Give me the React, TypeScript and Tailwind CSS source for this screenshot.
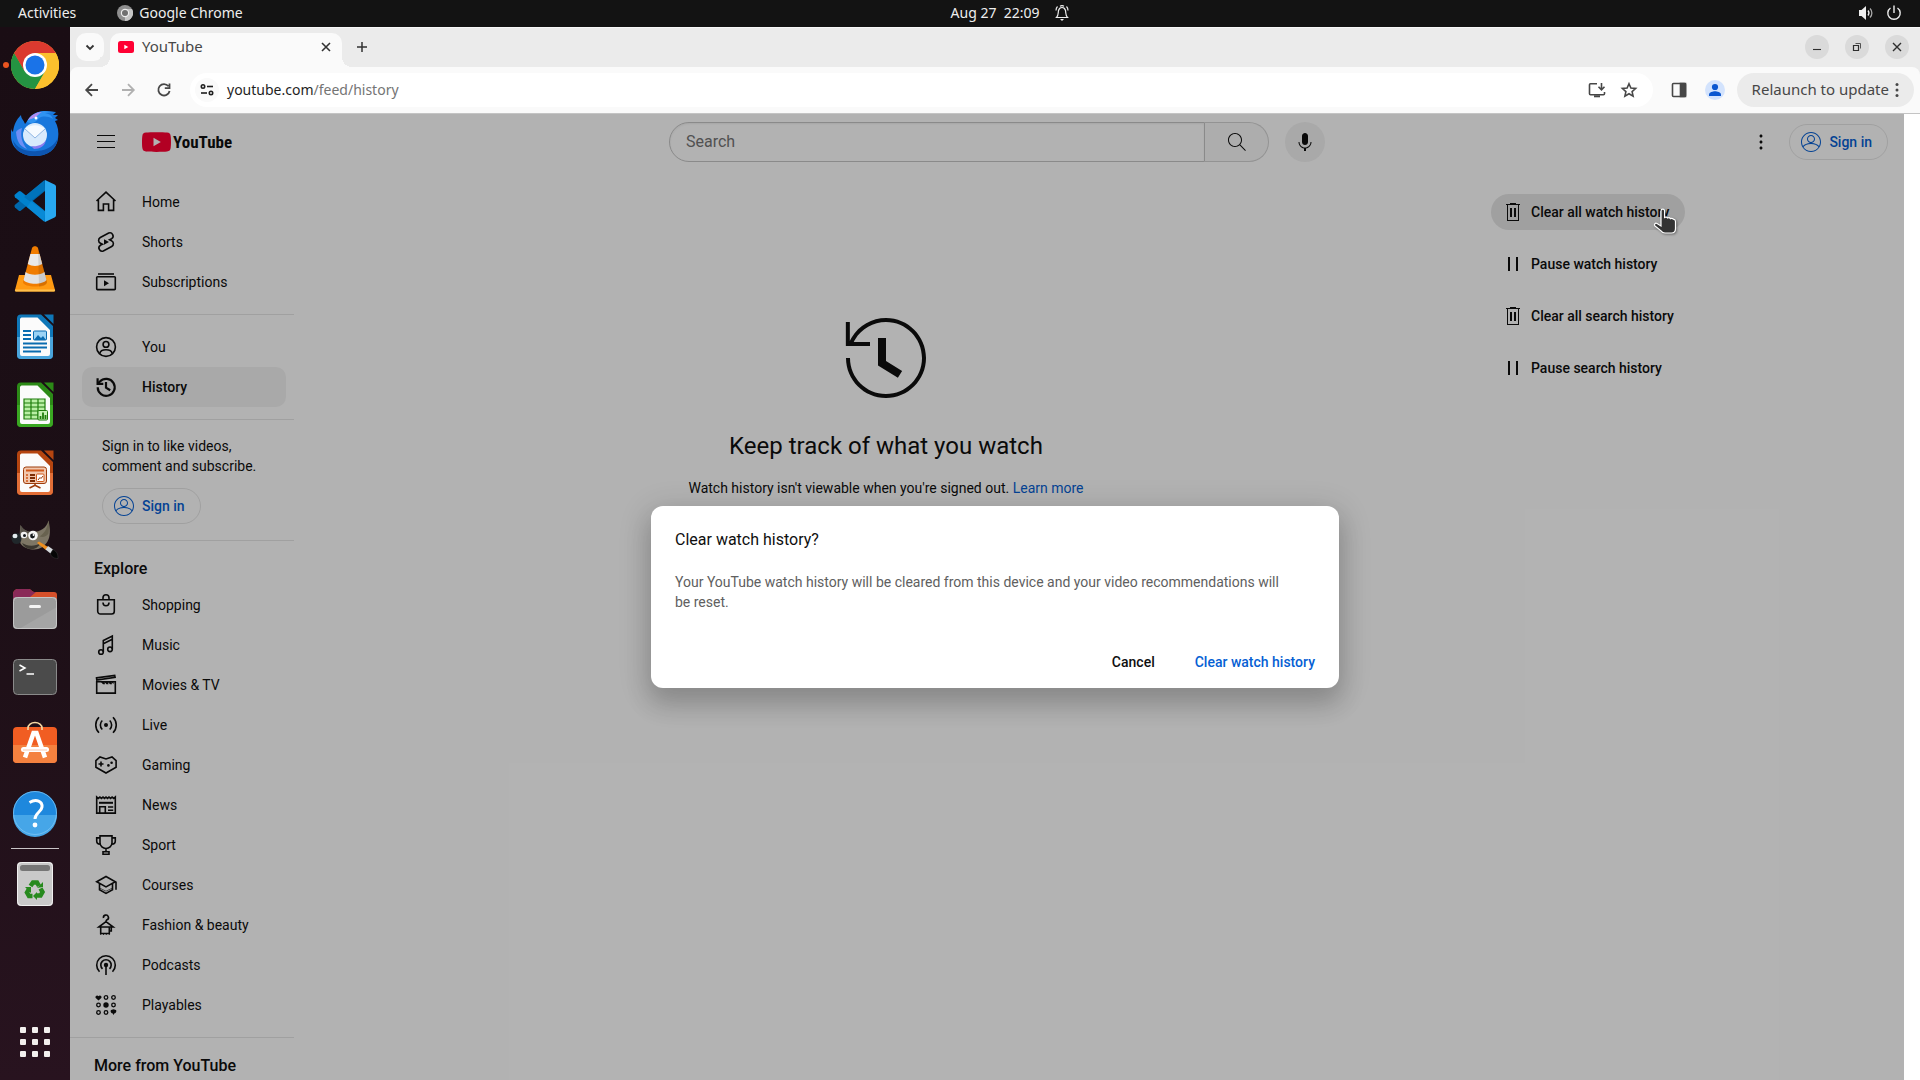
import React from "react";

type IconProps = { children: React.ReactNode; className?: string; box?: string };

/* Filled 24px glyph */
function Glyph({ children, className = "size-6", box = "0 0 24 24" }: IconProps) {
  return (
    <svg viewBox={box} className={`${className} shrink-0`} fill="currentColor" aria-hidden="true">
      {children}
    </svg>
  );
}

/* Outlined 24px glyph */
function Line({ children, className = "size-6", box = "0 0 24 24" }: IconProps) {
  return (
    <svg
      viewBox={box}
      className={`${className} shrink-0`}
      fill="none"
      stroke="currentColor"
      strokeWidth="1.6"
      aria-hidden="true"
    >
      {children}
    </svg>
  );
}

const DockArt = ({ children }: { children: React.ReactNode }) => (
  <svg viewBox="0 0 48 48" className="size-12" aria-hidden="true">
    {children}
  </svg>
);

/* ---------- Dock ---------- */

function OfficeDoc({ dark, light, children }: { dark: string; light: string; children: React.ReactNode }) {
  return (
    <DockArt>
      <path d="M10 1.5h20L42 13v29a4 4 0 0 1-4 4H10a4 4 0 0 1-4-4V5.500a4 4 0 0 1 4-4z" fill={dark} />
      <path d="M6 24h36v18a4 4 0 0 1-4 4H10a4 4 0 0 1-4-4z" fill={light} />
      <path d="M10.500 4.500h16L39 17v24a2 2 0 0 1-2 2H11a2 2 0 0 1-2-2V6.500a2 2 0 0 1 1.500-2z" fill="#fbfbfb" />
      <path d="M33 1.500h9.500v9.500z" fill={dark} />
      {children}
    </DockArt>
  );
}

const dockApps: { name: string; active?: boolean; art: React.ReactNode }[] = [
  {
    name: "Google Chrome",
    active: true,
    art: (
      <DockArt>
        <circle cx="24" cy="24" r="24" fill="#fbc02d" />
        <path d="M3.200 12A24 24 0 0 1 44.800 12H24L13.600 30z" fill="#db3a2f" />
        <path d="M3.200 12A24 24 0 0 0 24 48l10.400-18H24L13.600 30z" fill="#249442" />
        <path d="M24 12h20.800A24 24 0 0 1 24 48l10.400-18z" fill="#fbc02d" />
        <path d="M3.200 12 13.600 30 20 20 24 12z" fill="#db3a2f" />
        <circle cx="24" cy="24" r="12" fill="#fff" />
        <circle cx="24" cy="24" r="9.500" fill="#1a73e8" />
      </DockArt>
    ),
  },
  {
    name: "Thunderbird",
    art: (
      <DockArt>
        <path d="M0 19c0 2 1 3 2 4 1-7 3-12 8-17 0 4 3 5 4 9l3-4C20 5 27 2 35 2l10 1-3 3h5l-3 3 3 2-3 1c3 5 4 11 3 18-2 11-11 17-23 17C10 47 0 39 0 27z" fill="#1877dc" />
        <path d="M2 31c4 9 14 12 24 11 12-1 19-7 21-14-1 12-10 19-23 19S3 41 2 31z" fill="#0d55b0" />
        <path d="M16 13c2-6 9-10 17-11l10 1-9 1c5 1 7 3 8 6-5-3-10-3-14-1-3 5-8 6-12 4z" fill="#2f93f2" />
        <path d="M17 11c3-5 8-8 14-8-4 2-4 4-8 6-2 1-4 1-6 2z" fill="#b08cf0" />
        <circle cx="25" cy="9" r="1.500" fill="#fff" />
        <path d="M5 23c1 9 3 14 11 17-5-6-7-13-5-21-3 1-5 2-6 4z" fill="#6e8ff5" />
        <circle cx="24" cy="26" r="12" fill="#d8eafc" />
        <path d="M14 20c6-5 14-5 20 0L24 29z" fill="#f5faff" />
        <path d="m14 20 10 9 10-9" fill="none" stroke="#8fb6e3" strokeWidth="1" />
        <path d="M20 37c6 1 12-1 15-6-1 6-6 9-12 9z" fill="#8c7df0" />
      </DockArt>
    ),
  },
  {
    name: "Visual Studio Code",
    art: (
      <DockArt>
        <path d="M34 3v11L10 33.500a2 2 0 0 1-2.500 0L4 30.500a2 2 0 0 1 0-2.700z" fill="#0067ab" />
        <path d="M34 45V34L10 14.500a2 2 0 0 0-2.500 0L4 17.500a2 2 0 0 0 0 2.700z" fill="#0082ce" />
        <path d="M34 3v42l9.500-4.500a2.500 2.500 0 0 0 1.500-2V9.500a2.500 2.500 0 0 0-1.500-2z" fill="#28a8f0" />
        <path d="M33 3.500 13 20l6 4.500L34 13z" fill="#0073ba" />
        <path d="M33 44.500 16 30l4-5.500L34 35z" fill="#098ad6" />
      </DockArt>
    ),
  },
  {
    name: "VLC media player",
    art: (
      <DockArt>
        <path d="M8 30h32l4 15a1 1 0 0 1-1 1.500H5A1 1 0 0 1 4 45z" fill="#ff9a12" />
        <path d="M4 44.500h40v1.200a1 1 0 0 1-1 .800H5a1 1 0 0 1-1-.800z" fill="#ffc04c" />
        <path d="m21 3-9 34c0 6 24 6 24 0L27 3c-1-2.500-5-2.500-6 0z" fill="#f07c00" />
        <path d="M19.400 9h9.200l2.600 10c-4 2.500-10.400 2.500-14.400 0z" fill="#e9e9e9" />
        <path d="m14.600 27-2 8c4 5 18.800 5 22.800 0l-2-8c-4 3.500-14.800 3.500-18.800 0z" fill="#e2e2e2" />
        <path d="M27 3l9 34c0 3-4 4.500-8 4.800z" fill="#000" opacity=".1" />
      </DockArt>
    ),
  },
  {
    name: "LibreOffice Writer",
    art: (
      <OfficeDoc dark="#0f77b8" light="#4aa5dc">
        <path d="M12 18h8M12 22h8M12 26h8M12 30.500h24M12 34.500h24M12 38.500h18" stroke="#0a6cb0" strokeWidth="2" />
        <rect x="22.500" y="18" width="13" height="9" rx="1" fill="#9bd3f5" stroke="#0a6cb0" />
        <path d="m23 27 4-5 3 3 2-2 3 4z" fill="#0a6cb0" />
      </OfficeDoc>
    ),
  },
  {
    name: "LibreOffice Calc",
    art: (
      <OfficeDoc dark="#2c8a17" light="#3aa822">
        <path d="M13 18h21v20H13z" fill="#b9efa4" />
        <path d="M13 18h21v20H13zM20 18v20M27 18v20M13 22h21M13 26h21M13 30h21M13 34h21" fill="none" stroke="#1f7d0c" strokeWidth="1.200" />
        <rect x="27" y="29.500" width="9.500" height="9.500" rx="1" fill="#c7f3b5" stroke="#1f7d0c" />
        <path d="M29.500 38v-3M32 38v-6.500M34.500 38v-4" stroke="#1f7d0c" strokeWidth="1.800" />
      </OfficeDoc>
    ),
  },
  {
    name: "LibreOffice Impress",
    art: (
      <OfficeDoc dark="#b54510" light="#e26e37">
        <rect x="12.500" y="18" width="23" height="16.500" rx="2.500" fill="#f1c7ad" stroke="#9c3c0b" />
        <path d="M15 21.500h18" stroke="#d0581a" strokeWidth="2" />
        <path d="M15 26h2M15 29h2M15 32h2" stroke="#d0581a" strokeWidth="1.600" />
        <path d="M19 26h5M19 29h5M19 32h5" stroke="#7c2d06" strokeWidth="1.800" />
        <rect x="25.500" y="25" width="7.500" height="7.500" rx="1" fill="#fff" stroke="#d0581a" />
        <path d="m27 31 2-2.500 1 1 2-2.500" fill="none" stroke="#9c3c0b" />
        <path d="M24 34.500v2M18.500 39l5-2.500h1l5 2.500" fill="none" stroke="#9c3c0b" strokeWidth="1.600" />
      </OfficeDoc>
    ),
  },
  {
    name: "GIMP",
    art: (
      <DockArt>
        <path d="M9.500 8c2 4 6 7 12 7 8 0 14-4 16-11.500 2 9 2 16-1 21-3 5-8 8-13 8-6 0-11-2-14-6-1-6-1-12 0-18.500z" fill="#7d7665" />
        <path d="M9.500 8c2 4 6 7 12 7-6 1-9 2-12.500 5z" fill="#57524a" />
        <path d="M37.500 3.500c-1 7-3 12-9 16 4 1 7 0 9-3 .6-4 .6-8 0-13z" fill="#68624f" />
        <path d="M11 26c5 3 12 4 19 0-3 5-7 6.500-10 6-4 0-7-2-9-6z" fill="#3b372f" />
        <ellipse cx="5.500" cy="21.500" rx="5" ry="5.500" fill="#20272b" />
        <ellipse cx="4" cy="19" rx="2.500" ry="2.200" fill="#e4eaee" />
        <circle cx="13" cy="18" r="3.300" fill="#f2f2f2" />
        <circle cx="13.500" cy="18.500" r="1.500" fill="#15191c" />
        <circle cx="22" cy="18.500" r="4.800" fill="#f6f6f6" />
        <circle cx="21.500" cy="19" r="2.400" fill="#15191c" />
        <circle cx="22.500" cy="18" r=".9" fill="#fff" />
        <path d="m26 26 2-1.500 9 5.500-2 3z" fill="#ee8f1f" />
        <path d="m34.500 32.500 2.500-3.500 5 3.500-2.500 4z" fill="#d5d9dc" />
        <path d="m39.500 36.500 2.500-4c4 2 5 4.500 5 9-3 0-7-1-7.500-5z" fill="#060606" stroke="#3a3a3a" strokeWidth=".5" />
      </DockArt>
    ),
  },
  {
    name: "Files",
    art: (
      <DockArt>
        <path d="M2 9a5 5 0 0 1 5-5h11c2 0 3 3 5 3h20a3 3 0 0 1 3 3v10H2z" fill="#d6502a" />
        <path d="M2 9a5 5 0 0 1 5-5h11c2 0 3 3 5 3h2L12 18H2z" fill="#8a2a58" />
        <rect x="2" y="12" width="44" height="32" rx="4" fill="#a5a5a5" />
        <path d="M2 16a4 4 0 0 1 4-4h36a4 4 0 0 1 4 4v6L8 44H6a4 4 0 0 1-4-4z" fill="#979797" opacity=".7" />
        <rect x="2.500" y="12.500" width="43" height="31" rx="4" fill="none" stroke="#cfcfcf" strokeWidth=".8" />
        <rect x="18" y="20" width="12" height="3" rx="1.500" fill="#f4f4f4" />
      </DockArt>
    ),
  },
  {
    name: "Terminal",
    art: (
      <DockArt>
        <rect x="2.500" y="6.500" width="43" height="35" rx="4" fill="#4b4b4b" stroke="#8a8a8a" />
        <path d="m8.500 12 5.500 3-5.500 3M15.500 21H23" fill="none" stroke="#fff" strokeWidth="1.500" />
      </DockArt>
    ),
  },
  {
    name: "Ubuntu Software",
    art: (
      <DockArt>
        <path d="M2 10a4 4 0 0 1 4-4h36a4 4 0 0 1 4 4v28a4 4 0 0 1-4 4H6a4 4 0 0 1-4-4z" fill="#f15d22" />
        <path d="M2 24h44v14a4 4 0 0 1-4 4H6a4 4 0 0 1-4-4z" fill="#f4813f" />
        <path d="M17 9V7a7 5.500 0 0 1 14 0v2" fill="none" stroke="#f7d9a4" strokeWidth="1.600" />
        <path d="M14 36.500 22.500 12h3L34 36.500" fill="none" stroke="#fff" strokeWidth="4.500" />
        <rect x="10" y="26" width="28" height="5" rx="2.500" fill="#fff" />
        <path d="M12 29h24" stroke="#f6b99b" strokeWidth=".8" />
      </DockArt>
    ),
  },
  {
    name: "Help",
    art: (
      <DockArt>
        <circle cx="24" cy="24" r="22" fill="#1e88dd" />
        <path d="M2 26h44a22 22 0 0 1-44 0z" fill="#46a6e8" />
        <circle cx="24" cy="24" r="21.500" fill="none" stroke="#7cc4f2" strokeWidth=".8" />
        <path d="M18.500 13.500c7-4 13-1 12.500 4.500-.5 5-7 6-7 12" fill="none" stroke="#fff" strokeWidth="3" />
        <circle cx="24" cy="36" r="2.400" fill="#fff" />
      </DockArt>
    ),
  },
];

function Dock() {
  return (
    <nav aria-label="Dock" className="flex w-[70px] shrink-0 flex-col items-center bg-linear-to-b from-[#1a0d14] via-[#1c0f16] to-[#28131f] pt-1">
      {dockApps.map((app) => (
        <button key={app.name} aria-label={app.name} className="relative flex h-[68px] w-full shrink-0 items-center justify-center">
          {app.active && <span className="absolute left-[3px] size-1.5 rounded-full bg-[#e95420]" />}
          {app.art}
        </button>
      ))}
      <div className="mt-px h-px w-12 shrink-0 bg-[#c9c5c7]" />
      <button aria-label="Trash" className="mt-px flex h-[68px] w-full shrink-0 items-center justify-center">
        <DockArt>
          <rect x="6" y="2" width="36" height="44" rx="4" fill="#c9c9c9" />
          <rect x="6.500" y="2.500" width="35" height="43" rx="4" fill="none" stroke="#f0f0f0" />
          <rect x="9" y="5" width="30" height="6" rx="2.500" fill="#767676" />
          <g fill="none" stroke="#278a1e" strokeWidth="4.500">
            <path d="m19.500 26 2.500-3.500h4l2 3.500" />
            <path d="m29.500 28.500 2 3.500-2 3.500h-4.500" />
            <path d="M21.500 36h-3.500l-2-3.500 2-3.500" />
          </g>
          <path d="m26 28 6-1V22zM26 32v8l-4-4zM14 27h6v6z" fill="#278a1e" />
        </DockArt>
      </button>
      <button aria-label="Show Applications" className="mt-auto mb-1 flex h-[68px] w-full shrink-0 items-center justify-center">
        <span className="grid grid-cols-3 gap-1.5">
          {Array.from({ length: 9 }, (_, i) => (
            <span key={i} className="size-1.5 rounded-[1px] bg-[#f2f0ee]" />
          ))}
        </span>
      </button>
    </nav>
  );
}

/* ---------- System bar ---------- */

function SystemBar() {
  return (
    <header className="grid h-[27px] shrink-0 grid-cols-[1fr_auto_1fr] items-center bg-[#131313] pb-0.5 font-['Noto_Sans',sans-serif] text-[14px] leading-5 text-[#eeeeee]">
      <div className="flex items-center pl-[18px]">
        <button>Activities</button>
        <button className="ml-[41px] flex items-center gap-1.5">
          <svg viewBox="0 0 16 16" className="size-4" aria-hidden="true">
            <circle cx="8" cy="8" r="8" fill="#8f8f8f" />
            <path d="M8 16a8 8 0 0 0 7-12H8z" fill="#c6c6c6" />
            <circle cx="8" cy="8" r="4.200" fill="#eee" />
            <circle cx="8" cy="8" r="3" fill="#707070" />
          </svg>
          Google Chrome
        </button>
      </div>
      <button className="flex items-center gap-4 pl-25">
        <span className="whitespace-pre">Aug 27  22:09</span>
        <svg viewBox="0 0 14 16" className="h-4 w-3.5" fill="none" stroke="#eee" strokeWidth="1.200" aria-hidden="true">
          <path d="M1.500 12.500c2-1.500 1.500-4 2-7C4 3.500 5.500 2.500 7 2.500s3 1 3.500 3c.5 3 0 5.500 2 7zM2.500 1.500C1.500 2.500 1 4 1 5.500M11.500 1.500c1 1 1.500 2.500 1.500 4" />
          <path d="M5 14h4l-2 2z" fill="#eee" stroke="none" />
          <path d="M5 1.200c1-.6 3-.6 4 0" />
        </svg>
      </button>
      <button aria-label="System menu" className="flex items-center gap-3 justify-self-end pr-[18px]">
        <svg viewBox="0 0 16 16" className="size-4" fill="none" stroke="#eee" strokeWidth="1.300" aria-hidden="true">
          <path d="M1 5h2.500L8 1v14l-4.500-4H1z" fill="#eee" stroke="none" />
          <path d="M10 5.500c1.200 1.500 1.200 3.500 0 5" />
          <path d="M12 3.500c2.500 2.500 2.500 6.500 0 9" stroke="#aaa" />
        </svg>
        <svg viewBox="0 0 16 16" className="size-4" fill="none" stroke="#eee" strokeWidth="1.400" aria-hidden="true">
          <path d="M4.500 3a6.200 6.200 0 1 0 7 0M8 .5V8" />
        </svg>
      </button>
    </header>
  );
}

/* ---------- Browser chrome ---------- */

const roundButton = "flex size-6 items-center justify-center rounded-full bg-[#dadada]";

function TabStrip() {
  return (
    <div className="flex h-10 items-end justify-between border-t border-[#f7f7f7] bg-[#ebebeb]">
      <div className="flex h-[34px] items-start">
        <button aria-label="Search tabs" className="ml-1.5 flex size-7 items-center justify-center rounded-[10px] bg-[#fafafa] text-[#333]">
          <Line className="size-4" box="0 0 16 16">
            <path d="m4.500 6.500 3.500 3.500 3.500-3.500" strokeWidth="1.800" />
          </Line>
        </button>
        <div className="relative ml-1.5 flex h-[34px] w-58 rounded-t-[10px] bg-[#fafafa] pr-2 pl-2">
          <span className="absolute bottom-0 -left-2.5 size-2.5 bg-radial-[circle_at_0_0] from-[#ebebeb] from-[10px] to-[#fafafa] to-[10px]" />
          <span className="absolute -right-2.5 bottom-0 size-2.5 bg-radial-[circle_at_100%_0] from-[#ebebeb] from-[10px] to-[#fafafa] to-[10px]" />
          <button className="flex h-7 flex-1 items-center gap-2 text-left text-[15px] text-[#474747]">
            <svg viewBox="0 0 16 12" className="h-3 w-4" aria-hidden="true">
              <rect width="16" height="12" rx="2.500" fill="#ff0033" />
              <path d="M6.300 3.700v4.600l4-2.300z" fill="#fff" />
            </svg>
            <span className="pb-0.5">YouTube</span>
          </button>
          <button aria-label="Close tab" className="flex h-7 w-4 items-center justify-center text-[#333]">
            <Line className="size-4" box="0 0 16 16">
              <path d="m4 4 8 8M12 4l-8 8" strokeWidth="1.600" />
            </Line>
          </button>
        </div>
        <button aria-label="New tab" className="ml-1.5 flex size-7 items-center justify-center text-[#333]">
          <Line className="size-4" box="0 0 16 16">
            <path d="M8 3v10M3 8h10" strokeWidth="1.500" />
          </Line>
        </button>
      </div>
      <div className="flex h-[34px] items-start gap-4 pt-0.5 pr-[11px] text-[#2e2e2e]">
        <button aria-label="Minimise" className={roundButton}>
          <Line className="size-4" box="0 0 16 16"><path d="M4 10.500h8" strokeWidth="1.100" /></Line>
        </button>
        <button aria-label="Restore" className={roundButton}>
          <Line className="size-4" box="0 0 16 16">
            <path d="M4.500 6.500h5v5h-5z" strokeWidth="1.200" />
            <path d="M6.500 4.500h5v5" strokeWidth=".8" />
          </Line>
        </button>
        <button aria-label="Close" className={roundButton}>
          <Line className="size-4" box="0 0 16 16"><path d="m4 4 8 8M12 4l-8 8" strokeWidth="1.400" /></Line>
        </button>
      </div>
    </div>
  );
}

const toolButton = "flex size-9 items-center justify-center";

function Toolbar() {
  return (
    <div className="bg-[#ebebeb]">
      <div className="flex h-[46px] items-center rounded-t-lg bg-[#fafafa] pr-1.5 pl-1 text-[#474747]">
        <button aria-label="Back" className={toolButton}>
          <Line className="size-5" box="0 0 20 20"><path d="M16 10H4.500M10 4.200 4.200 10l5.800 5.800" strokeWidth="1.800" /></Line>
        </button>
        <button aria-label="Forward" className={`${toolButton} text-[#b0b0b0]`}>
          <Line className="size-5" box="0 0 20 20"><path d="M4 10h11.500M10 4.200l5.800 5.800-5.800 5.800" strokeWidth="1.800" /></Line>
        </button>
        <button aria-label="Reload" className={toolButton}>
          <Line className="size-5" box="0 0 20 20">
            <path d="M14.500 6.200A5.700 5.700 0 1 0 15.600 11M15.500 3.500v4.700h-4.700" strokeWidth="1.800" />
          </Line>
        </button>
        <div className="ml-2 flex h-[34px] flex-1 items-center rounded-full bg-white pr-2 pl-[5px]">
          <button aria-label="View site information" className="flex size-6 items-center justify-center rounded-full bg-[#fafafa] text-[#1f1f1f]">
            <Line className="size-4" box="0 0 16 16">
              <circle cx="4" cy="4.500" r="1.700" />
              <path d="M8 4.500h6" />
              <circle cx="12" cy="11" r="1.700" />
              <path d="M2 11h6" />
            </Line>
          </button>
          <div className="relative ml-2 flex-1 pb-0.5 text-[14px]">
            <input aria-label="Address" defaultValue="youtube.com/feed/history" className="w-full bg-transparent text-transparent outline-none" />
            <span aria-hidden="true" className="pointer-events-none absolute inset-0 text-[#1f1f1f]">
              youtube.com<span className="text-[#747474]">/feed/history</span>
            </span>
          </div>
          <button aria-label="Install YouTube" className="flex size-8 items-center justify-center">
            <Line className="size-5" box="0 0 20 20">
              <path d="M10 3.800H3.500a1 1 0 0 0-1 1v9a1 1 0 0 0 1 1h13a1 1 0 0 0 1-1V12" />
              <path d="M7 16.300h6" strokeWidth="2" />
              <path d="M14.500 3v6.500M11.500 6.800l3 3 3-3" />
            </Line>
          </button>
          <button aria-label="Bookmark this tab" className="flex size-8 items-center justify-center">
            <Line className="size-5" box="0 0 20 20">
              <path d="m10 3.800 1.900 4.300 4.700.4-3.500 3.100 1 4.600-4.100-2.400-4.100 2.400 1-4.600-3.500-3.100 4.700-.4z" />
            </Line>
          </button>
        </div>
        <button aria-label="Side panel" className={`${toolButton} ml-2`}>
          <Line className="size-4" box="0 0 16 16">
            <rect x="1.500" y="1.500" width="13" height="13" rx="1" />
            <path d="M9.500 1.500h5v13h-5z" fill="currentColor" />
          </Line>
        </button>
        <button aria-label="Profile" className={toolButton}>
          <svg viewBox="0 0 20 20" className="size-5" aria-hidden="true">
            <circle cx="10" cy="10" r="10" fill="#d3e3fd" />
            <circle cx="10" cy="7" r="3.100" fill="#0b57d0" />
            <path d="M4 16v-1.500c0-2 4-3.200 6-3.200s6 1.200 6 3.200V16z" fill="#0b57d0" />
          </svg>
        </button>
        <button className="ml-1 flex h-[34px] items-center rounded-full bg-[#ebebeb] pr-[9px] pl-[15px] text-[15px] whitespace-nowrap">
          <span className="pb-0.5">Relaunch to update</span>
          <Glyph className="size-4" box="0 0 16 16">
            <circle cx="8" cy="2.500" r="1.500" />
            <circle cx="8" cy="8" r="1.500" />
            <circle cx="8" cy="13.500" r="1.500" />
          </Glyph>
        </button>
      </div>
    </div>
  );
}

/* ---------- YouTube page ---------- */

const PersonThin = () => (
  <Glyph>
    <path d="M12 2C6.480 2 2 6.480 2 12s4.480 10 10 10 10-4.480 10-10S17.520 2 12 2zm0 1c4.960 0 9 4.040 9 9 0 1.420-.34 2.760-.93 3.960-1.530-1.720-3.980-2.890-7.380-3.030C14.570 12.600 16 10.970 16 9c0-2.210-1.790-4-4-4S8 6.790 8 9c0 1.970 1.430 3.600 3.310 3.930-3.400.14-5.850 1.310-7.380 3.030C3.340 14.760 3 13.420 3 12c0-4.960 4.040-9 9-9zM9 9c0-1.650 1.350-3 3-3s3 1.350 3 3-1.350 3-3 3-3-1.350-3-3zm3 12c-3.160 0-5.940-1.640-7.550-4.120C6.010 14.930 8.610 13.900 12 13.900s5.990 1.030 7.550 2.980C17.940 19.360 15.160 21 12 21z" />
  </Glyph>
);

const SignInButton = () => (
  <a href="#signin" className="flex h-9 w-fit items-center gap-1.5 rounded-full border border-black/10 pr-[15px] pl-[9px] text-sm font-medium whitespace-nowrap text-[#065fd4]">
    <PersonThin />
    Sign in
  </a>
);

const icons = {
  home: <Line><path d="M2.500 11 12 2.200l9.500 8.800M4.400 9.500v10.900h5V14h5.200v6.400h5V9.500" /></Line>,
  shorts: (
    <Glyph>
      <path d="M10 14.650v-5.300L15 12l-5 2.650z" />
      <path
        d="m17.500 10.700-1.900-.9 2.100-1.100a3.250 3.250 0 0 0-3-5.700l-8.400 4.500a3.250 3.250 0 0 0 .2 5.800l1.900.9-2.100 1.100a3.250 3.250 0 0 0 3 5.700l8.400-4.500a3.250 3.250 0 0 0-.2-5.800z"
        fill="none"
        stroke="currentColor"
        strokeWidth="1.600"
      />
    </Glyph>
  ),
  subs: (
    <Line>
      <rect x="2.700" y="6.700" width="18.600" height="12.900" rx=".8" />
      <path d="M4 4h16" />
      <path d="m10 10.200 5 3-5 3z" fill="currentColor" stroke="none" />
    </Line>
  ),
  you: (
    <Line>
      <circle cx="12" cy="12" r="9.400" />
      <circle cx="12" cy="9.400" r="2.900" />
      <path d="M5.800 18.500c.8-5 11.600-5 12.400 0" />
    </Line>
  ),
  history: (
    <Line>
      <path d="M3.700 12.300a8.500 8.500 0 1 0 2.200-5.700L3.600 8.900" strokeWidth="2.200" />
      <path d="M3.600 3.200v5.700h5.700" strokeWidth="2.200" />
      <path d="M12 7v5.600l4.200 2.600" strokeWidth="2.200" />
    </Line>
  ),
  shopping: (
    <Line>
      <path d="M3.700 6.700h16.600v11.600a2.700 2.700 0 0 1-2.700 2.700H6.400a2.700 2.700 0 0 1-2.700-2.700z" />
      <path d="M9 6.500V4.700a3 3 0 0 1 6 0v1.800M9 9.500a3 3.300 0 0 0 6 0" />
    </Line>
  ),
  music: (
    <Line>
      <circle cx="7" cy="19" r="2.300" />
      <circle cx="16" cy="16.300" r="2.300" />
      <path d="M9.300 19V7.500l9-4.500v13.300M9.300 10.800l9-4.500" />
    </Line>
  ),
  movies: (
    <Line>
      <path d="M2.700 8.700h18.600v11.400H2.700zM2.500 4.900l18.200-2.500.4 2L2.800 7.100z" />
      <path d="M4.500 8.500h15v2.700l-2-2.300.5 2.300h-2l-2-2.300.5 2.300h-2l-2-2.300.5 2.300h-2L7 8.900z" fill="currentColor" stroke="none" />
    </Line>
  ),
  live: (
    <Line>
      <circle cx="12" cy="12" r="2" fill="currentColor" stroke="none" />
      <path d="M8.300 7.500a6.200 6.200 0 0 0 0 9M15.700 7.500a6.200 6.200 0 0 1 0 9M5 4.200a11 11 0 0 0 0 15.600M19 4.200a11 11 0 0 1 0 15.600" />
    </Line>
  ),
  gaming: (
    <Line>
      <path d="M1.900 7.700 6 3.900l6 2 6-2 4.100 3.800v6.600L12 20 1.900 14.300zM4.500 11h5M7 8.500v5" />
      <circle cx="14.400" cy="12.400" r="1.300" fill="currentColor" stroke="none" />
      <circle cx="17.600" cy="9.700" r="1.300" fill="currentColor" stroke="none" />
    </Line>
  ),
  news: (
    <Line>
      <path d="M2.700 4v16.100h18.600V4l-1.600 1.400L18.100 4l-1.500 1.400L15 4l-1.500 1.400L12 4l-1.500 1.400L9 4 7.400 5.400 5.900 4 4.300 5.400z" />
      <path d="M5 9.800h14" strokeWidth="2" />
      <path d="M5.700 20v-6.300h5.600V20M14 14h5.200M14 17.200h5.200" />
    </Line>
  ),
  sport: (
    <Line>
      <path d="M6 2.900h12v6.800c0 3.400-3 5.800-6 5.800s-6-2.400-6-5.800zM6 4.900H2.700v3c0 2 1.300 3.200 3.500 3.200M18 4.900h3.300v3c0 2-1.300 3.200-3.500 3.200M12 15.500v3M9 18.700h6v2.600H9z" />
    </Line>
  ),
  courses: (
    <Line>
      <path d="M2.700 8.700 12 3.500l9.300 5.200L12 13.900zM5.500 10.500v6.300l6.500 3.600 6.500-3.600v-6.300M22 8.700v8" />
      <path d="M5.500 15 12 18.200l6.500-3.200" strokeWidth=".6" />
    </Line>
  ),
  fashion: (
    <Line>
      <path d="M9.500 5A2.500 2.500 0 1 1 13 6.800c-.8.400-1 .9-1 1.900L4.800 14h14.400L12 8.700M6.700 14v6.500h8.600V14M15.300 18h2v-4" />
      <path d="M6.700 20v1.800M9.500 20v1.800M12.300 20v1.800M15.300 20v1.800" strokeWidth="1" />
    </Line>
  ),
  podcasts: (
    <Line>
      <path d="M5.500 18.700a9.300 9.300 0 1 1 13 0M8.500 15.800a5.200 5.200 0 1 1 7 0M12 12v10" />
      <circle cx="12" cy="12" r="2.200" fill="currentColor" stroke="none" />
    </Line>
  ),
  playables: (
    <Line>
      <path d="M4.500 7.500 1.500 4.700c-.3-2 2-3 3-1.400 1-1.600 3.300-.6 3 1.400z" fill="currentColor" stroke="none" />
      <path d="m19.500 22-1-1.700c-1.800 0-2.800-3.600-.6-3.600l1.600-.4 1.600.4c2.200 0 1.200 3.600-.6 3.600z" fill="currentColor" stroke="none" />
      <circle cx="12" cy="12" r="2.700" fill="currentColor" stroke="none" />
      <circle cx="12" cy="4.500" r="1.800" strokeWidth="1.300" />
      <circle cx="19.500" cy="4.500" r="1.800" strokeWidth="1.300" />
      <circle cx="4.500" cy="12" r="1.800" strokeWidth="1.300" />
      <circle cx="19.500" cy="12" r="1.800" strokeWidth="1.300" />
      <circle cx="4.500" cy="19.500" r="1.800" strokeWidth="1.300" />
      <circle cx="12" cy="19.500" r="1.800" strokeWidth="1.300" />
    </Line>
  ),
};

type Entry = { label: string; icon: keyof typeof icons; current?: boolean };

const mainEntries: Entry[] = [
  { label: "Home", icon: "home" },
  { label: "Shorts", icon: "shorts" },
  { label: "Subscriptions", icon: "subs" },
];
const youEntries: Entry[] = [
  { label: "You", icon: "you" },
  { label: "History", icon: "history", current: true },
];
const exploreEntries: Entry[] = [
  { label: "Shopping", icon: "shopping" },
  { label: "Music", icon: "music" },
  { label: "Movies & TV", icon: "movies" },
  { label: "Live", icon: "live" },
  { label: "Gaming", icon: "gaming" },
  { label: "News", icon: "news" },
  { label: "Sport", icon: "sport" },
  { label: "Courses", icon: "courses" },
  { label: "Fashion & beauty", icon: "fashion" },
  { label: "Podcasts", icon: "podcasts" },
  { label: "Playables", icon: "playables" },
];

function GuideList({ entries }: { entries: Entry[] }) {
  return (
    <ul className="mr-2 ml-3">
      {entries.map((e) => (
        <li key={e.label}>
          <a
            href="#guide"
            aria-current={e.current ? "page" : undefined}
            className={`flex h-10 items-center gap-6 rounded-[10px] px-3 ${e.current ? "bg-black/5 font-medium" : ""}`}
          >
            {icons[e.icon]}
            {e.label}
          </a>
        </li>
      ))}
    </ul>
  );
}

function Guide() {
  return (
    <nav aria-label="Guide" className="mr-4 w-56 shrink-0 text-sm">
      <div className="border-b border-black/10 py-3">
        <GuideList entries={mainEntries} />
      </div>
      <div className="border-b border-black/10 py-3">
        <GuideList entries={youEntries} />
      </div>
      <div className="border-b border-black/10 py-4 pl-8">
        <p className="pr-4">Sign in to like videos, comment and subscribe.</p>
        <div className="mt-3">
          <SignInButton />
        </div>
      </div>
      <div className="border-b border-black/10 py-3">
        <h3 className="pl-6 text-base leading-8 font-medium">Explore</h3>
        <GuideList entries={exploreEntries} />
      </div>
      <div className="py-3">
        <h3 className="pl-6 text-base leading-8 font-medium">More from YouTube</h3>
      </div>
    </nav>
  );
}

function Masthead() {
  return (
    <header className="flex h-14 shrink-0 items-center justify-between px-4">
      <div className="flex w-[241px] items-center">
        <button aria-label="Guide" className="flex size-10 items-center justify-center">
          <Glyph><path d="M21 6H3V5h18v1zm0 5H3v1h18v-1zm0 6H3v1h18v-1z" /></Glyph>
        </button>
        <a href="#home" aria-label="YouTube home" className="ml-4 flex items-center gap-0.5">
          <svg viewBox="0 0 29 20" className="h-5 w-[29px]" aria-hidden="true">
            <path d="M4 .5C8 0 21 0 25 .5c2.500.3 3.400 1.200 3.700 3.700.4 3 .4 8.600 0 11.600-.3 2.500-1.200 3.400-3.700 3.700-4 .5-17 .5-21 0C1.500 19.200.6 18.300.3 15.800c-.4-3-.4-8.600 0-11.600C.6 1.700 1.500.8 4 .5z" fill="#ff0033" />
            <path d="M11.500 5.800v8.400L18.800 10z" fill="#fff" />
          </svg>
          <span className="font-['Roboto_Condensed',Roboto,sans-serif] text-[17px] leading-5 font-bold">YouTube</span>
        </a>
      </div>
      <div className="flex w-[732px] items-center pl-10">
        <form className="flex h-10 w-[600px]" onSubmit={(e) => e.preventDefault()}>
          <input
            aria-label="Search"
            placeholder="Search"
            className="min-w-0 flex-1 rounded-l-full border border-[#c6c6c6] bg-white pr-1 pl-4 text-base shadow-[inset_0_1px_2px_#eeeeee] outline-none placeholder:text-[#757575]"
          />
          <button aria-label="Search" className="flex w-16 items-center justify-center rounded-r-full border border-l-0 border-[#d3d3d3] bg-[#f8f8f8]">
            <Glyph><path d="m20.870 20.170-5.590-5.590C16.350 13.350 17 11.750 17 10c0-3.870-3.130-7-7-7s-7 3.130-7 7 3.130 7 7 7c1.750 0 3.350-.65 4.580-1.710l5.590 5.590.7-.71zM10 16c-3.310 0-6-2.690-6-6s2.690-6 6-6 6 2.690 6 6-2.690 6-6 6z" /></Glyph>
          </button>
        </form>
        <button aria-label="Search with your voice" className="ml-4 flex size-10 items-center justify-center rounded-full bg-black/5">
          <Glyph><path d="M12 3c-1.660 0-3 1.370-3 3.070v5.860c0 1.700 1.340 3.070 3 3.070s3-1.370 3-3.070V6.070C15 4.370 13.660 3 12 3zm6.500 9h-1c0 3.030-2.470 5.500-5.500 5.500S6.500 15.030 6.500 12h-1c0 3.240 2.390 5.930 5.500 6.410V21h2v-2.590c3.110-.48 5.500-3.170 5.500-6.410z" /></Glyph>
        </button>
      </div>
      <div className="flex w-[225px] items-center justify-end gap-2">
        <button aria-label="Settings" className="flex size-10 items-center justify-center">
          <Glyph><path d="M12 16.500c.83 0 1.500.67 1.500 1.500s-.67 1.500-1.500 1.500-1.500-.67-1.500-1.500.67-1.500 1.500-1.500zM10.500 12c0 .83.670 1.500 1.500 1.500s1.500-.67 1.500-1.500-.67-1.500-1.500-1.500-1.500.67-1.500 1.500zm0-6c0 .83.670 1.500 1.500 1.500s1.500-.67 1.500-1.500-.67-1.500-1.500-1.500-1.500.67-1.500 1.500z" /></Glyph>
        </button>
        <SignInButton />
      </div>
    </header>
  );
}

const TrashIcon = () => (
  <Glyph><path d="M11 17H9V8h2v9zm4-9h-2v9h2V8zm4-4v1h-1v16H6V5H5V4h4V3h6v1h4zm-2 1H7v15h10V5z" /></Glyph>
);
const PauseIcon = () => (
  <Glyph><path d="M7 5h2v14H7zM15 5h2v14h-2z" /></Glyph>
);

const actions = [
  { label: "Clear all watch history", Icon: TrashIcon, hovered: true },
  { label: "Pause watch history", Icon: PauseIcon },
  { label: "Clear all search history", Icon: TrashIcon },
  { label: "Pause search history", Icon: PauseIcon },
];

function HistoryPage() {
  return (
    <div className="flex min-w-0 flex-1">
      <main className="flex flex-1 flex-col items-center pt-[140px]">
        <Glyph className="size-24">
          <path d="M14.970 16.950 10 13.870V7h2v5.760l4.030 2.490-1.060 1.700zM22 12c0 5.510-4.490 10-10 10S2 17.510 2 12h1c0 4.960 4.040 9 9 9s9-4.040 9-9-4.040-9-9-9C8.810 3 5.920 4.640 4.280 7.380c-.11.18-.22.370-.31.560L3.940 8H8v1H1.960V3h1v4.740c.04-.09.07-.17.11-.25.11-.22.23-.42.35-.63C5.220 3.860 8.510 2 12 2c5.510 0 10 4.490 10 10z" />
        </Glyph>
        <h1 className="mt-6 text-2xl">Keep track of what you watch</h1>
        <p className="mt-4 text-sm">
          Watch history isn't viewable when you're signed out.{" "}
          <a href="#learn" className="text-[#065fd4]">Learn more</a>
        </p>
      </main>
      <aside className="flex w-[442px] shrink-0 flex-col items-start gap-4 pt-6 pl-[29px]">
        {actions.map(({ label, Icon, hovered }) => (
          <button
            key={label}
            className={`flex h-9 items-center gap-1.5 rounded-full pr-4 pl-2.5 text-sm font-medium ${hovered ? "bg-black/10" : ""}`}
          >
            <Icon />
            {label}
          </button>
        ))}
      </aside>
    </div>
  );
}

function ClearDialog() {
  return (
    <div
      role="dialog"
      aria-labelledby="dialog-title"
      className="w-[688px] rounded-xl bg-white text-[#0f0f0f] shadow-[0_16px_24px_2px_rgba(0,0,0,0.14),0_6px_30px_5px_rgba(0,0,0,0.12)]"
    >
      <h2 id="dialog-title" className="px-6 pt-[22px] text-base">Clear watch history?</h2>
      <p className="pt-5 pr-12 pl-6 text-sm text-[#606060]">
        Your YouTube watch history will be cleared from this device and your video recommendations will be reset.
      </p>
      <div className="mt-6 flex justify-end gap-2 p-2 text-sm font-medium">
        <button className="h-9 rounded-full px-4">Cancel</button>
        <button className="h-9 rounded-full px-4 text-[#065fd4]">Clear watch history</button>
      </div>
    </div>
  );
}

export default function App() {
  return (
    <div className="relative flex h-screen flex-col overflow-hidden">
      <SystemBar />
      <div className="flex min-h-0 flex-1">
        <Dock />
        <div className="flex min-w-0 flex-1 flex-col">
          <div className="shrink-0 border-b border-[#c4c4c4] font-['Noto_Sans',sans-serif]">
            <TabStrip />
            <Toolbar />
          </div>
          <div className="relative flex min-h-0 flex-1 flex-col overflow-hidden bg-white pr-4 font-[Roboto,sans-serif] text-[#0f0f0f]">
            <Masthead />
            <div className="flex min-h-0 flex-1">
              <Guide />
              <HistoryPage />
            </div>
            <div className="absolute inset-0 right-4 bg-black/30" />
            <div className="absolute inset-0 flex items-center justify-center">
              <ClearDialog />
            </div>
          </div>
        </div>
      </div>
      {/* Pointer */}
      <svg viewBox="0 0 24 28" className="absolute top-[208px] right-[243px] h-7 w-6 drop-shadow-[1px_1px_1px_rgba(0,0,0,0.4)]" aria-hidden="true">
        <path
          d="M8 3a1.800 1.800 0 0 1 3.600 0v6.500c1-.6 2.500-.4 3 .5 1-.5 2.300-.2 2.800.6 1-.5 2.300-.1 3 .6 1.200.2 2.100 1 2.100 2.300v7c0 2.500-1.500 4.500-4 4.500H12c-2 0-3-.8-4-2.200L2 18c-1.500-1.600.3-3.400 2-2.500l4 2.500z"
          fill="#333"
          stroke="#fff"
          strokeWidth="1.200"
        />
      </svg>
    </div>
  );
}
